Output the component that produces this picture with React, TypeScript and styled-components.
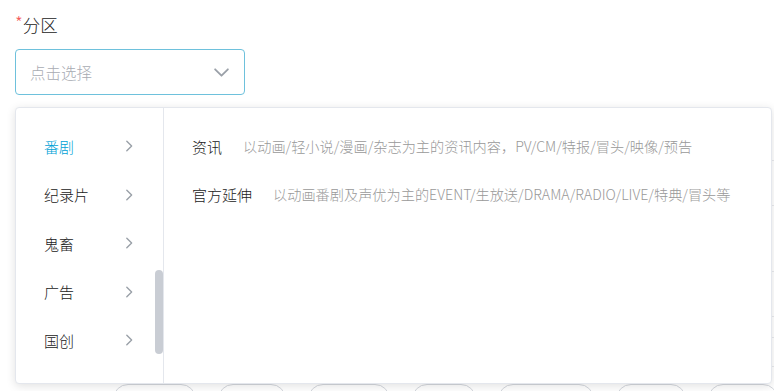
import React from 'react';
import styled, {createGlobalStyle} from 'styled-components';

const GlobalStyle = createGlobalStyle`
  html, body {
    margin: 0;
    padding: 0;
    background: #fff;
    overflow: hidden;
  }
  body {
    font-family: "Noto Sans CJK SC", "Noto Sans", sans-serif;
    color: #212121;
  }
`

const categories = ['番剧', '纪录片', '鬼畜', '广告', '国创']

const subs = [
	{name: '资讯', desc: '以动画/轻小说/漫画/杂志为主的资讯内容，PV/CM/特报/冒头/映像/预告'},
	{name: '官方延伸', desc: '以动画番剧及声优为主的EVENT/生放送/DRAMA/RADIO/LIVE/特典/冒头等'},
]

// faint form rows behind the popup
const bgRows = [66, 45, 66, 45, 21, 29]
const pills = [83, 68, 82, 64, 96, 70, 70]

function Chevron({size = 14, dir = 'right'}: {size?: number, dir?: 'right' | 'down'}) {
	return (
		<svg width={size} height={size} viewBox="0 0 16 16" fill="none">
			{dir === 'right'
				? <polyline points="5.5,2.5 11,8 5.5,13.5" stroke="#9aa0a8" strokeWidth="1.6" strokeLinecap="round" strokeLinejoin="round"/>
				: <polyline points="2,5 8,11 14,5" stroke="#9aa0a8" strokeWidth="1.7" strokeLinecap="round" strokeLinejoin="round"/>}
		</svg>
	)
}

export default function App() {
	return (
		<Page>
			<GlobalStyle/>
			<Label><Star>*</Star>分区</Label>
			<SelectWrap>
				<SelectBox>
					<Placeholder>点击选择</Placeholder>
					<Chevron size={17} dir="down"/>
				</SelectBox>
				<Popup>
					<CatColumn>
						{categories.map((c, i) => (
							<CatItem key={c} $active={i === 0}>
								<span>{c}</span>
								<Chevron/>
							</CatItem>
						))}
						<ScrollThumb/>
					</CatColumn>
					<SubColumn>
						{subs.map(s => (
							<SubItem key={s.name}>
								<SubName>{s.name}</SubName>
								<SubDesc>{s.desc}</SubDesc>
							</SubItem>
						))}
					</SubColumn>
				</Popup>
			</SelectWrap>
			<BgSection>
				{bgRows.map((h, i) => <BgRow key={i} $h={h}/>)}
				<PillRow>
					{pills.map((w, i) => <Pill key={i} $w={w}/>)}
				</PillRow>
			</BgSection>
		</Page>
	);
}

const Page = styled.div`
  padding: 13px 0 0 15px;
  width: 774px;
  height: 391px;
  box-sizing: border-box;
  overflow: hidden;
`

const Label = styled.div`
  height: 24px;
  line-height: 24px;
  font-size: 17.5px;
  font-weight: 300;
  color: #222;
  margin-bottom: 12px;
`

const Star = styled.span`
  color: #f45a5a;
  position: relative;
  top: -2px;
`

const SelectWrap = styled.div`
  position: relative;
  width: 230px;
  z-index: 2;
`

const SelectBox = styled.div`
  height: 46px;
  box-sizing: border-box;
  border: 1px solid #6ec1dc;
  border-radius: 4px;
  display: flex;
  align-items: center;
  justify-content: space-between;
  padding: 0 14px 0 14px;
`

const Placeholder = styled.span`
  font-size: 15.5px;
  font-weight: 300;
  color: #a8abb2;
`

const Popup = styled.div`
  position: absolute;
  top: calc(100% + 12px);
  left: 0;
  width: 757px;
  height: 277px;
  box-sizing: border-box;
  background: #fff;
  border: 1px solid #e4e7ed;
  border-radius: 4px;
  box-shadow: 0 2px 10px rgba(0, 0, 0, 0.12);
  display: flex;
`

const CatColumn = styled.div`
  position: relative;
  width: 148px;
  box-sizing: border-box;
  border-right: 1px solid #e4e7ed;
  padding: 14px 0 0 0;
  overflow: hidden;
`

const CatItem = styled.div<{$active?: boolean}>`
  height: 48.5px;
  display: flex;
  align-items: center;
  justify-content: space-between;
  padding: 0 27px 0 28px;
  font-size: 15px;
  font-weight: 300;
  color: ${p => p.$active ? '#00a1d6' : '#212121'};
`

const ScrollThumb = styled.div`
  position: absolute;
  right: 0;
  top: 162px;
  width: 8px;
  height: 84px;
  border-radius: 4px;
  background: #c9cdd4;
`

const SubColumn = styled.div`
  flex: 1;
  padding: 14px 0 0 28px;
`

const SubItem = styled.div`
  height: 48px;
  display: flex;
  align-items: center;
  gap: 21px;
  white-space: nowrap;
`

const SubName = styled.span`
  font-size: 15px;
  font-weight: 300;
  color: #212121;
`

const SubDesc = styled.span`
  font-size: 14.2px;
  font-weight: 300;
  color: #999;
`

const BgSection = styled.div`
  margin-right: -20px;
`

const BgRow = styled.div<{$h: number}>`
  height: ${p => p.$h}px;
  box-sizing: border-box;
  border-bottom: 1px solid #e8eaee;
`

const PillRow = styled.div`
  display: flex;
  gap: 22px;
  padding: 17px 0 0 98px;
`

const Pill = styled.div<{$w: number}>`
  width: ${p => p.$w}px;
  height: 30px;
  flex-shrink: 0;
  box-sizing: border-box;
  border: 1px solid #d4d7dd;
  border-radius: 15px;
`
